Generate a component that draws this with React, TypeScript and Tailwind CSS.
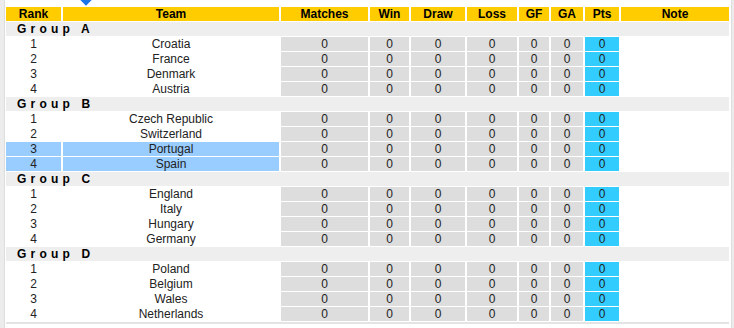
import React from "react";

const groups: { name: string; teams: string[] }[] = [
  { name: "Group A", teams: ["Croatia", "France", "Denmark", "Austria"] },
  { name: "Group B", teams: ["Czech Republic", "Switzerland", "Portugal", "Spain"] },
  { name: "Group C", teams: ["England", "Italy", "Hungary", "Germany"] },
  { name: "Group D", teams: ["Poland", "Belgium", "Wales", "Netherlands"] },
];

const headers = ["Rank", "Team", "Matches", "Win", "Draw", "Loss", "GF", "GA", "Pts", "Note"];

const gridCols =
  "grid grid-cols-[55px_216px_87px_39px_54px_50px_30px_32px_34px_108px] gap-x-[2px]";

export default function App() {
  return (
    <div
      className="relative w-[734px] h-[328px] bg-white overflow-hidden flex text-[12px] leading-[14px] text-[#222]"
      style={{ fontFamily: "Arial, 'Liberation Sans', sans-serif" }}
    >
      <div className="w-[5px] h-full bg-[#ececec] border-r border-[#dedede] shrink-0" />
      <div className="w-[724px] flex flex-col pt-[7px] ml-px">
        <div className="absolute left-[82px] top-[-4px] w-[8px] h-[8px] bg-[#1a73e8] rotate-45" />
        <div className="flex flex-col gap-y-px">
          <div className={gridCols}>
            {headers.map((h) => (
              <div
                key={h}
                className="h-[14px] bg-[#ffcc00] text-center font-bold text-black"
              >
                {h}
              </div>
            ))}
          </div>
          {groups.map((g) => (
            <React.Fragment key={g.name}>
              <div className="h-[14px] w-[723px] bg-[#eeeeee] pl-[11px] font-bold text-black tracking-[4.2px]">
                {g.name}
              </div>
              {g.teams.map((t, i) => {
                const hl = t === "Portugal" || t === "Spain";
                return (
                  <div key={t} className={gridCols}>
                    <div className={`h-[14px] text-center ${hl ? "bg-[#99ccff]" : ""}`}>
                      {i + 1}
                    </div>
                    <div className={`h-[14px] text-center ${hl ? "bg-[#99ccff]" : ""}`}>
                      {t}
                    </div>
                    <div className="h-[14px] text-center bg-[#dddddd]">0</div>
                    <div className="h-[14px] text-center bg-[#dddddd]">0</div>
                    <div className="h-[14px] text-center bg-[#dddddd]">0</div>
                    <div className="h-[14px] text-center bg-[#dddddd]">0</div>
                    <div className="h-[14px] text-center bg-[#dddddd]">0</div>
                    <div className="h-[14px] text-center bg-[#dddddd]">0</div>
                    <div className="h-[14px] text-center bg-[#33ccff]">0</div>
                    <div className="h-[14px]" />
                  </div>
                );
              })}
            </React.Fragment>
          ))}
        </div>
        <div className="mt-[1px] h-[2px] w-[723px] bg-[#e4e4e4]" />
      </div>
      <div className="ml-auto w-[3px] h-full bg-[#ececec] border-l border-[#dedede]" />
    </div>
  );
}
